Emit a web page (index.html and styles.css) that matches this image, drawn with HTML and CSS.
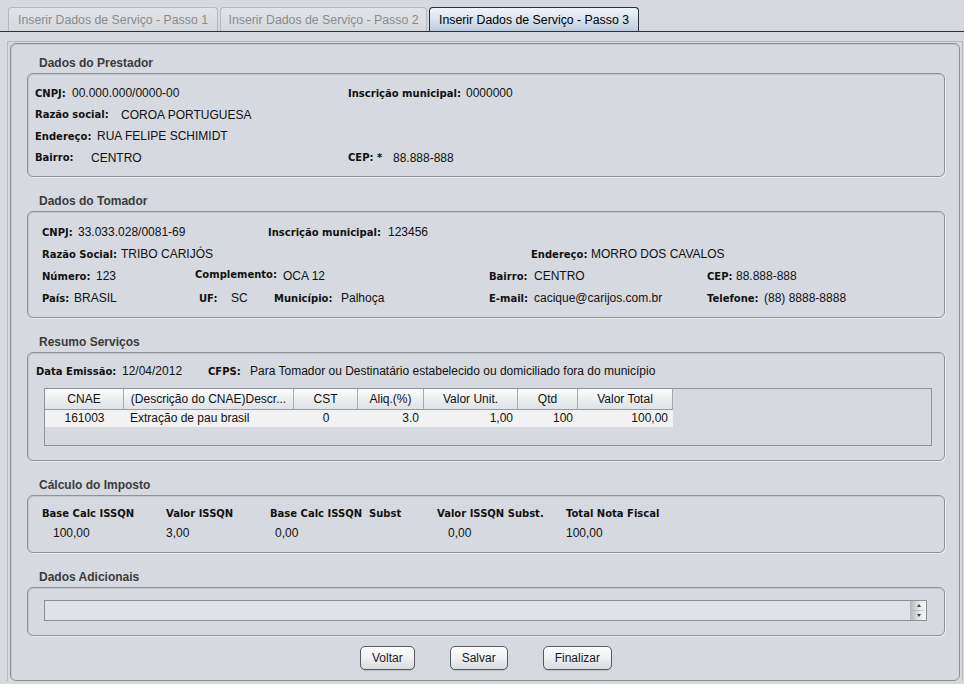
FILE: index.html
```html
<!DOCTYPE html>
<html lang="pt-BR">
<head>
<meta charset="utf-8">
<title>Inserir Dados de Serviço</title>
<link rel="stylesheet" href="styles.css">
</head>
<body>
<div class="tabbar">
  <div class="tab">Inserir Dados de Serviço - Passo 1</div>
  <div class="tab tab-narrow">Inserir Dados de Serviço - Passo 2</div>
  <div class="tab tab-active">Inserir Dados de Serviço - Passo 3</div>
</div>
<div class="frame">
  <div class="panel">
    <section class="group">
      <h2 class="group-title">Dados do Prestador</h2>
      <div class="box box-prestador">
        <div class="row">
          <span class="lbl w37">CNPJ:</span><span class="val w276">00.000.000/0000-00</span>
          <span class="lbl w118">Inscrição municipal:</span><span class="val">0000000</span>
        </div>
        <div class="row">
          <span class="lbl w86">Razão social:</span><span class="val">COROA PORTUGUESA</span>
        </div>
        <div class="row">
          <span class="lbl w62">Endereço:</span><span class="val">RUA FELIPE SCHIMIDT</span>
        </div>
        <div class="row">
          <span class="lbl w56">Bairro:</span><span class="val w257">CENTRO</span>
          <span class="lbl w45">CEP: *</span><span class="val">88.888-888</span>
        </div>
      </div>
    </section>

    <section class="group">
      <h2 class="group-title">Dados do Tomador</h2>
      <div class="box box-tomador">
        <div class="row">
          <span class="lbl w36">CNPJ:</span><span class="val w190">33.033.028/0081-69</span>
          <span class="lbl w120">Inscrição municipal:</span><span class="val">123456</span>
        </div>
        <div class="row">
          <span class="lbl w79">Razão Social:</span><span class="val w410">TRIBO CARIJÓS</span>
          <span class="lbl w60">Endereço:</span><span class="val">MORRO DOS CAVALOS</span>
        </div>
        <div class="row">
          <span class="lbl w54">Número:</span><span class="val w99">123</span>
          <span class="lbl w88 raised">Complemento:</span><span class="val w206">OCA 12</span>
          <span class="lbl w45">Bairro:</span><span class="val w173">CENTRO</span>
          <span class="lbl w29">CEP:</span><span class="val">88.888-888</span>
        </div>
        <div class="row">
          <span class="lbl w32">País:</span><span class="val w125">BRASIL</span>
          <span class="lbl w32">UF:</span><span class="val w43">SC</span>
          <span class="lbl w67">Município:</span><span class="val w148">Palhoça</span>
          <span class="lbl w45">E-mail:</span><span class="val w173">cacique@carijos.com.br</span>
          <span class="lbl w57">Telefone:</span><span class="val">(88) 8888-8888</span>
        </div>
      </div>
    </section>

    <section class="group">
      <h2 class="group-title">Resumo Serviços</h2>
      <div class="box box-resumo">
        <div class="row row-resumo">
          <span class="lbl w86">Data Emissão:</span><span class="val w86">12/04/2012</span>
          <span class="lbl w42">CFPS:</span><span class="val">Para Tomador ou Destinatário estabelecido ou domiciliado fora do município</span>
        </div>
        <div class="table">
          <div class="thead">
            <div class="th c1">CNAE</div>
            <div class="th c2">(Descrição do CNAE)Descr...</div>
            <div class="th c3">CST</div>
            <div class="th c4">Aliq.(%)</div>
            <div class="th c5">Valor Unit.</div>
            <div class="th c6">Qtd</div>
            <div class="th c7">Valor Total</div>
          </div>
          <div class="trow">
            <div class="td c1 center">161003</div>
            <div class="td c2">Extração de pau brasil</div>
            <div class="td c3 center">0</div>
            <div class="td c4 right">3.0</div>
            <div class="td c5 right">1,00</div>
            <div class="td c6 right">100</div>
            <div class="td c7 right">100,00</div>
          </div>
        </div>
      </div>
    </section>

    <section class="group">
      <h2 class="group-title">Cálculo do Imposto</h2>
      <div class="box box-calculo">
        <div class="calc-grid">
          <span class="lbl">Base Calc ISSQN</span>
          <span class="lbl">Valor ISSQN</span>
          <span class="lbl">Base Calc ISSQN&nbsp; Subst</span>
          <span class="lbl">Valor ISSQN Subst.</span>
          <span class="lbl">Total Nota Fiscal</span>
          <span class="val ind11">100,00</span>
          <span class="val">3,00</span>
          <span class="val ind5">0,00</span>
          <span class="val ind11">0,00</span>
          <span class="val">100,00</span>
        </div>
      </div>
    </section>

    <section class="group">
      <h2 class="group-title">Dados Adicionais</h2>
      <div class="box box-adicionais">
        <div class="textarea">
          <div class="spinner">
            <span class="arrow-up"></span>
            <span class="grip"></span>
            <span class="arrow-down"></span>
          </div>
        </div>
      </div>
    </section>

    <div class="actions">
      <button class="btn">Voltar</button>
      <button class="btn">Salvar</button>
      <button class="btn">Finalizar</button>
    </div>
  </div>
</div>
</body>
</html>
```

FILE: styles.css
```css
html, body {
  margin: 0;
  padding: 0;
}

body {
  width: 964px;
  height: 684px;
  overflow: hidden;
  background: #d6d9df;
  font-family: "Liberation Sans", Arial, sans-serif;
  font-size: 12px;
  color: #000;
}

/* ---------- tabs ---------- */
.tabbar {
  display: flex;
  gap: 2px;
  height: 24px;
  padding: 7px 0 0 8px;
  border-bottom: 1px solid #27303b;
}

.tab {
  box-sizing: border-box;
  width: 210px;
  height: 24px;
  display: flex;
  align-items: center;
  justify-content: center;
  border: 1px solid #b4b7bc;
  border-bottom: none;
  border-radius: 4px 4px 0 0;
  background: linear-gradient(#e2e4e8, #d5d8dd);
  color: #8a8b8e;
  font-size: 12.3px;
  white-space: nowrap;
}

.tab-narrow {
  width: 207px;
}

.tab-active {
  border-color: #25303d;
  background: linear-gradient(#f0f4f9, #dce5ef 45%, #bccbdc);
  color: #000;
}

/* ---------- frame / panel ---------- */
.frame {
  margin: 9px 1px 0 7px;
  padding: 1px 2px 0 2px;
  border: 1px solid #b6b9be;
  border-bottom: none;
}

.panel {
  padding: 12px 14px 10px 16px;
  border: 1px solid #8b8e94;
  border-radius: 6px;
  box-shadow: inset 1px 1px 0 #c6c9ce;
}

.group + .group {
  margin-top: 17px;
}

.group-title {
  margin: 0 0 3px 12px;
  height: 14px;
  font-family: "Liberation Sans", Arial, sans-serif;
  font-weight: bold;
  font-size: 12px;
  line-height: 15px;
  color: #3b3b3b;
}

.box {
  box-sizing: border-box;
  border: 1px solid #8e9196;
  border-radius: 6px;
  box-shadow: inset 1px 1px 0 #c3c6cb, 1px 1px 0 #e9ebee;
}

.box-prestador {
  height: 104px;
  padding: 8.5px 0 0 7px;
}

.box-prestador .row {
  height: 21.5px;
}

.box-tomador {
  height: 107px;
  padding: 9px 0 0 14px;
}

.box-tomador .row {
  height: 22px;
}

.box-resumo {
  height: 109px;
  padding: 8px 0 0 8px;
}

.box-calculo {
  height: 58px;
  padding: 7px 0 0 14px;
}

.box-adicionais {
  height: 49px;
  padding: 12px 17px 0 16px;
}

/* ---------- rows ---------- */
.row {
  display: flex;
  align-items: center;
  height: 20px;
}

.row-resumo {
  height: 20px;
}

.lbl {
  flex: none;
  font-family: "DejaVu Sans", Verdana, sans-serif;
  font-weight: bold;
  font-size: 10px;
  white-space: nowrap;
  color: #111;
}

.val {
  flex: none;
  white-space: nowrap;
  font-size: 12px;
  color: #111;
}

.raised {
  margin-bottom: 4px;
}

.w29 { width: 29px; }
.w32 { width: 32px; }
.w36 { width: 36px; }
.w37 { width: 37px; }
.w42 { width: 42px; }
.w43 { width: 43px; }
.w45 { width: 45px; }
.w54 { width: 54px; }
.w56 { width: 56px; }
.w57 { width: 57px; }
.w60 { width: 60px; }
.w62 { width: 62px; }
.w67 { width: 67px; }
.w79 { width: 79px; }
.w86 { width: 86px; }
.w88 { width: 88px; }
.w99 { width: 99px; }
.w118 { width: 118px; }
.w120 { width: 120px; }
.w125 { width: 125px; }
.w148 { width: 148px; }
.w173 { width: 173px; }
.w190 { width: 190px; }
.w206 { width: 206px; }
.w257 { width: 257px; }
.w276 { width: 276px; }
.w410 { width: 410px; }

/* ---------- table ---------- */
.table {
  box-sizing: border-box;
  height: 58px;
  margin: 7px 12px 0 8px;
  border: 1px solid #8f9297;
}

.thead,
.trow {
  display: flex;
}

.th {
  box-sizing: border-box;
  height: 21px;
  line-height: 20px;
  text-align: center;
  white-space: nowrap;
  border-right: 1px solid #a6a9ae;
  border-bottom: 1px solid #999ca1;
  background: linear-gradient(#fcfcfd, #eceef0 50%, #dfe2e6);
  color: #111;
}

.td {
  box-sizing: border-box;
  height: 17px;
  line-height: 17px;
  padding: 0 6px;
  white-space: nowrap;
  background: #f2f2f3;
  color: #111;
}

.center { text-align: center; }
.right { text-align: right; padding-right: 5px; }

.c1 { width: 79px; }
.c2 { width: 170px; }
.c3 { width: 64px; }
.c4 { width: 66px; }
.c5 { width: 94px; }
.c6 { width: 60px; }
.c7 { width: 95px; }

/* ---------- cálculo ---------- */
.calc-grid {
  display: grid;
  grid-template-columns: 124px 104px 167px 129px auto;
  grid-auto-rows: 20px;
  align-items: center;
}

.ind11 { padding-left: 11px; }
.ind5 { padding-left: 5px; }

/* ---------- textarea ---------- */
.textarea {
  box-sizing: border-box;
  height: 21px;
  display: flex;
  justify-content: flex-end;
  border: 1px solid #8b8e93;
  background: #dfe2e7;
}

.spinner {
  width: 15px;
  display: flex;
  flex-direction: column;
  align-items: center;
  justify-content: space-between;
  border-left: 1px solid #b3b6bb;
  background: linear-gradient(90deg, #b9bbbf, #e9eaec 60%, #f4f4f5);
}

.arrow-up,
.arrow-down {
  width: 0;
  height: 0;
  margin: 3px 0;
  border-left: 2px solid transparent;
  border-right: 2px solid transparent;
}

.arrow-up {
  border-bottom: 3px solid #3c3f44;
}

.arrow-down {
  border-top: 3px solid #3c3f44;
}

.grip {
  flex: 1;
  width: 13px;
  background: linear-gradient(90deg, #a9acb0, #d8dadd);
}

/* ---------- buttons ---------- */
.actions {
  display: flex;
  justify-content: center;
  gap: 35px;
  margin-top: 10px;
}

.btn {
  height: 24px;
  padding: 0 11px;
  border: 1px solid #56595e;
  border-radius: 5px;
  background: linear-gradient(#fdfdfd, #eef0f2 50%, #d9dce0);
  box-shadow: 0 1px 0 #b9bcc1;
  font-family: "Liberation Sans", Arial, sans-serif;
  font-size: 12px;
  color: #1a1a1a;
}
```
